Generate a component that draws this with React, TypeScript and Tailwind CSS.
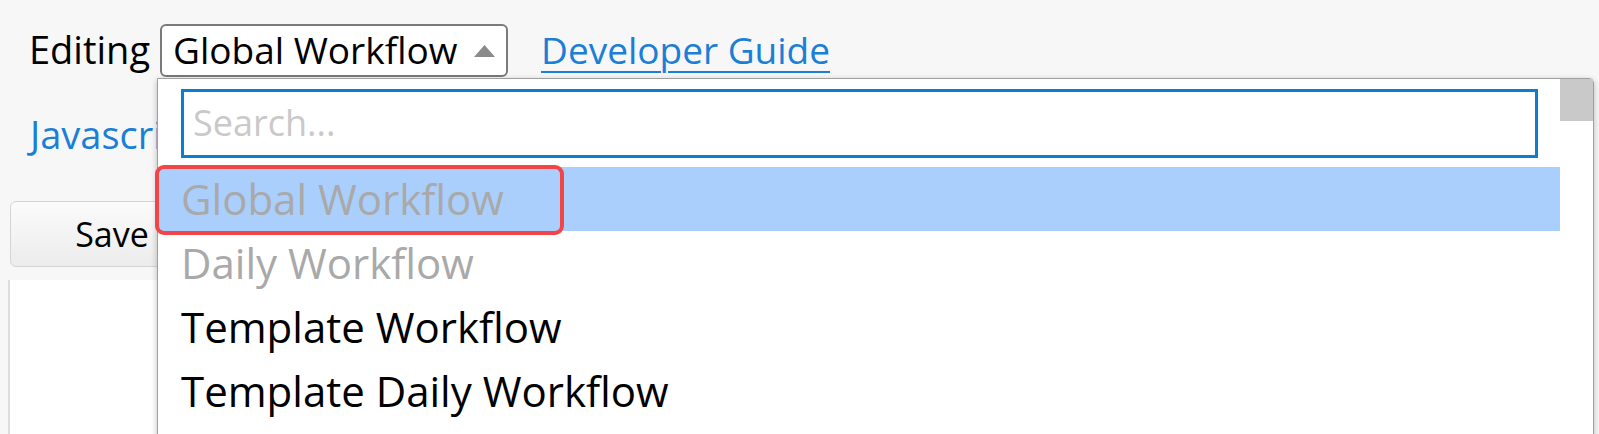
import React from "react";

const OPTIONS = [
  { label: "Global Workflow", disabled: true, active: true },
  { label: "Daily Workflow", disabled: true, active: false },
  { label: "Template Workflow", disabled: false, active: false },
  { label: "Template Daily Workflow", disabled: false, active: false },
];

const App: React.FC = () => {
  return (
    <div
      className="relative w-[1599px] h-[434px] overflow-hidden bg-[#f7f7f7] text-black"
      style={{ fontFamily: '"Open Sans", "Noto Sans", sans-serif' }}
    >
      {/* page behind the dropdown */}
      <div className="flex flex-col">
        <div className="flex items-center pt-[24px] pl-[29px] h-[77px]">
          <span className="text-[38px] leading-none mr-[10px] -mt-[4px]">Editing</span>
          <div className="flex items-center justify-between h-[53px] w-[348px] bg-white border-2 border-[#7a7a7a] rounded-[6px] pl-[11px] pr-[10px]">
            <span className="text-[37px] leading-none whitespace-nowrap -mt-[3px]">Global Workflow</span>
            <svg width="23" height="14" viewBox="0 0 23 14">
              <polygon points="11.5,1 22,13 1,13" fill="#8a8a8a" />
            </svg>
          </div>
          <a className="ml-[33px] text-[37px] leading-none text-[#1a7fd5] underline underline-offset-[7px] decoration-2 -mt-[2px]">
            Developer Guide
          </a>
        </div>

        <div className="pl-[30px] pt-[38px] h-[124px]">
          <span className="text-[38px] leading-none text-[#1a7fd5] whitespace-nowrap">Javascript Editor</span>
        </div>

        <div className="pl-[10px]">
          <button className="w-[204px] h-[66px] rounded-[6px] border border-[#d4d4d4] bg-gradient-to-b from-[#fbfbfb] to-[#ececec] text-[34px] leading-none">
            Save
          </button>
        </div>

        <div className="ml-[8px] mt-[13px] h-[160px] w-[400px] bg-white border-l-2 border-[#dcdcdc]" />
      </div>

      {/* open dropdown */}
      <div className="absolute left-[157px] top-[78px] w-[1437px] h-[440px] bg-white border border-[#a0a0a0] rounded-tr-[5px] shadow-[0_2px_6px_rgba(0,0,0,0.25)] flex">
        <div className="flex-1 flex flex-col">
          <div className="shrink-0 pt-[10px] pl-[23px] pr-[22px] pb-[9px]">
            <div className="h-[69px] border-[3px] border-[#0b7fcd] flex items-center pl-[9px]">
              <span className="text-[36px] leading-none text-[#c9c9c9] -mt-[2px]">Search...</span>
            </div>
          </div>
          {OPTIONS.map((o) => (
            <div
              key={o.label}
              className={`shrink-0 h-[64px] flex items-center pl-[23px] text-[42px] leading-none whitespace-nowrap ${
                o.active ? "bg-[#aacffc]" : ""
              } ${o.disabled ? "text-[#a9a9a9]" : "text-black"}`}
            >
              {o.label}
            </div>
          ))}
        </div>
        <div className="w-[33px] flex flex-col">
          <div className="h-[42px] bg-[#c9c9c9]" />
        </div>
      </div>

      {/* annotation */}
      <div className="absolute left-[155px] top-[165px] w-[409px] h-[70px] border-[4px] border-[#f24545] rounded-[9px]" />
    </div>
  );
};

export default App;
